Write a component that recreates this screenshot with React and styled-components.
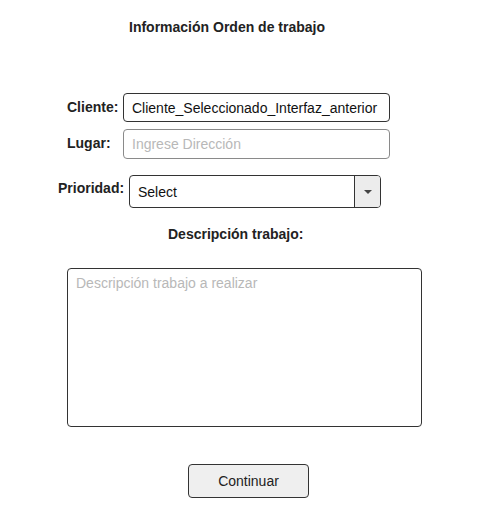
import React from 'react'
import styled, { createGlobalStyle } from 'styled-components'

const GlobalStyle = createGlobalStyle`
  body {
    margin: 0;
    background: #ffffff;
    font-family: "Liberation Sans", Arial, sans-serif;
  }
`

const Page = styled.div`
  width: 499px;
  height: 523px;
  padding-top: 19px;
  box-sizing: border-box;
`

const Title = styled.h1`
  margin: 0 0 0 129px;
  font-size: 14px;
  font-weight: bold;
  color: #222;
  line-height: 17px;
`

const Form = styled.div`
  display: flex;
  flex-direction: column;
  margin-top: 57px;
`

const Row = styled.div`
  display: flex;
  align-items: center;
  margin-left: ${props => props.indent}px;
  margin-top: ${props => props.top || 0}px;
`

const Label = styled.label`
  width: ${props => props.width}px;
  flex: none;
  font-size: 14px;
  font-weight: bold;
  color: #222;
  margin-top: ${props => props.shift || 0}px;
`

const Field = styled.div`
  width: 267px;
  height: ${props => props.height}px;
  box-sizing: border-box;
  border: 1px solid ${props => (props.muted ? '#8a8a8a' : '#333')};
  border-radius: 4px;
  padding: 0 8px;
  display: flex;
  align-items: center;
  font-size: 14px;
  color: ${props => (props.faded ? '#b8b8b8' : '#111')};
  white-space: nowrap;
`

const Select = styled.div`
  width: 252px;
  height: 33px;
  box-sizing: border-box;
  border: 1px solid #333;
  border-radius: 4px;
  display: flex;
  overflow: hidden;
`

const SelectValue = styled.div`
  flex: 1;
  display: flex;
  align-items: center;
  padding-left: 8px;
  font-size: 14px;
  color: #111;
`

const SelectArrow = styled.div`
  width: 25px;
  border-left: 1px solid #333;
  background: #ececec;
  display: flex;
  align-items: center;
  justify-content: center;
`

const Caret = styled.span`
  width: 0;
  height: 0;
  border-left: 4px solid transparent;
  border-right: 4px solid transparent;
  border-top: 4px solid #444;
`

const Subtitle = styled.div`
  margin: 18px 0 0 168px;
  font-size: 14px;
  font-weight: bold;
  color: #222;
  line-height: 17px;
`

const TextArea = styled.div`
  margin: 25px 0 0 67px;
  width: 355px;
  height: 159px;
  box-sizing: border-box;
  border: 1px solid #333;
  border-radius: 4px;
  padding: 6px 8px;
  font-size: 14px;
  color: #b8b8b8;
`

const Button = styled.button`
  margin: 37px 0 0 188px;
  width: 121px;
  height: 34px;
  border: 1px solid #333;
  border-radius: 4px;
  background: #efefef;
  font-family: "Liberation Sans", Arial, sans-serif;
  font-size: 14px;
  color: #222;
`

const App = () => (
  <Page>
    <GlobalStyle />
    <Title>Información Orden de trabajo</Title>
    <Form>
      <Row indent={67}>
        <Label width={56} shift={-2}>Cliente:</Label>
        <Field height={29}>Cliente_Seleccionado_Interfaz_anterior</Field>
      </Row>
      <Row indent={67} top={7}>
        <Label width={56} shift={-2}>Lugar:</Label>
        <Field height={30} muted faded>Ingrese Dirección</Field>
      </Row>
      <Row indent={58} top={16}>
        <Label width={71} shift={-8}>Prioridad:</Label>
        <Select>
          <SelectValue>Select</SelectValue>
          <SelectArrow>
            <Caret />
          </SelectArrow>
        </Select>
      </Row>
    </Form>
    <Subtitle>Descripción trabajo:</Subtitle>
    <TextArea>Descripción trabajo a realizar</TextArea>
    <Button>Continuar</Button>
  </Page>
)

export default App
